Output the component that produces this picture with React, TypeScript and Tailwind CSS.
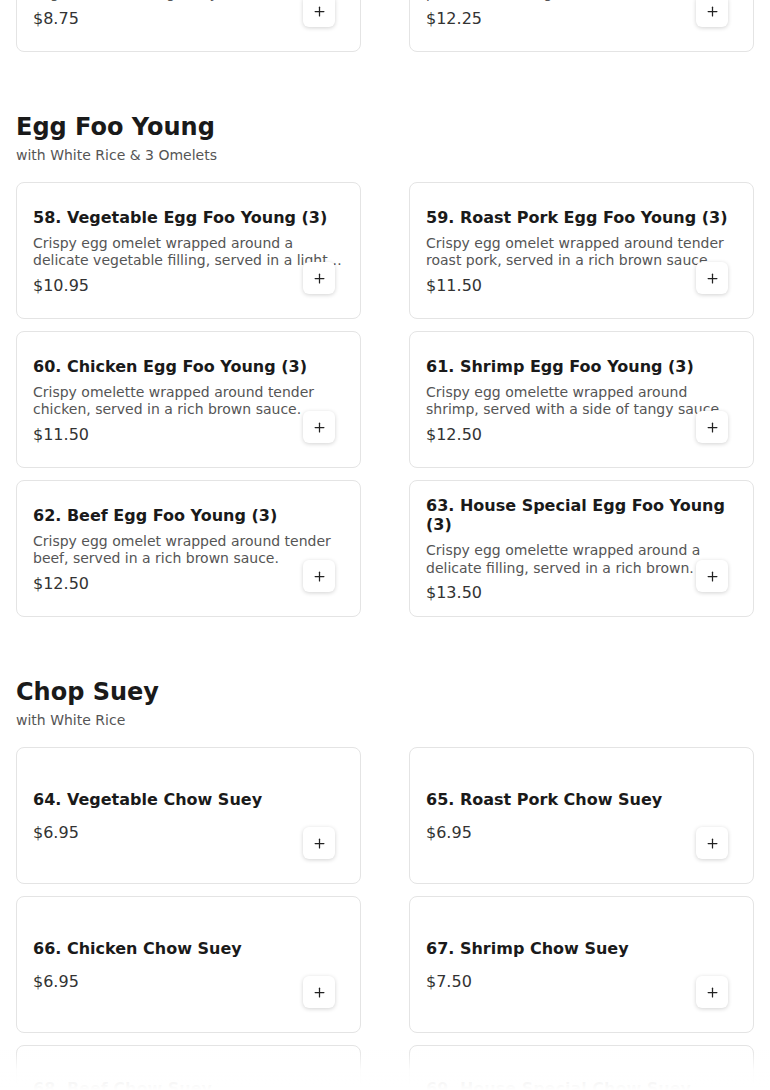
import { Plus } from "lucide-react";

type Item = { name: string; desc?: string; price: string };

const prevItems: Item[] = [
  {
    name: "56. Vegetable Lo Mein",
    desc: "Soft egg noodles tossed with crisp mixed vegetables and a light soy sauce.",
    price: "$8.75",
  },
  {
    name: "57. House Special Lo Mein",
    desc: "Egg noodles with shrimp, chicken and roast pork, stir-fried together.",
    price: "$12.25",
  },
];

const sections: { title: string; subtitle: string; items: Item[] }[] = [
  {
    title: "Egg Foo Young",
    subtitle: "with White Rice & 3 Omelets",
    items: [
      {
        name: "58. Vegetable Egg Foo Young (3)",
        desc: "Crispy egg omelet wrapped around a delicate vegetable filling, served in a light brown sauce.",
        price: "$10.95",
      },
      {
        name: "59. Roast Pork Egg Foo Young (3)",
        desc: "Crispy egg omelet wrapped around tender roast pork, served in a rich brown sauce.",
        price: "$11.50",
      },
      {
        name: "60. Chicken Egg Foo Young (3)",
        desc: "Crispy omelette wrapped around tender chicken, served in a rich brown sauce.",
        price: "$11.50",
      },
      {
        name: "61. Shrimp Egg Foo Young (3)",
        desc: "Crispy egg omelette wrapped around shrimp, served with a side of tangy sauce.",
        price: "$12.50",
      },
      {
        name: "62. Beef Egg Foo Young (3)",
        desc: "Crispy egg omelet wrapped around tender beef, served in a rich brown sauce.",
        price: "$12.50",
      },
      {
        name: "63. House Special Egg Foo Young (3)",
        desc: "Crispy egg omelette wrapped around a delicate filling, served in a rich brown.",
        price: "$13.50",
      },
    ],
  },
  {
    title: "Chop Suey",
    subtitle: "with White Rice",
    items: [
      { name: "64. Vegetable Chow Suey", price: "$6.95" },
      { name: "65. Roast Pork Chow Suey", price: "$6.95" },
      { name: "66. Chicken Chow Suey", price: "$6.95" },
      { name: "67. Shrimp Chow Suey", price: "$7.50" },
      { name: "68. Beef Chow Suey", desc: "Tender beef with bean sprouts.", price: "$7.50" },
      { name: "69. House Special Chow Suey", desc: "Shrimp, chicken and pork.", price: "$7.95" },
    ],
  },
];

function MenuCard({ item }: { item: Item }) {
  return (
    <div className="relative h-[137px] rounded-lg border border-[#e4e4e4] bg-white px-4 pt-1 flex flex-col justify-center">
      <h3 className="text-base font-bold leading-[19px] text-[#1a1a1a] mb-2">{item.name}</h3>
      {item.desc && (
        <p className="text-sm leading-tight text-[#555] line-clamp-2">{item.desc}</p>
      )}
      <div className="mt-1 text-base leading-6 text-[#333]">{item.price}</div>
      <button className="absolute bottom-6 right-[25px] w-8 h-8 rounded-md bg-white shadow-[0_1px_4px_rgba(0,0,0,0.18)] flex items-center justify-center text-[#222]">
        <Plus size={15} strokeWidth={2} />
      </button>
    </div>
  );
}

export default function App() {
  return (
    <div
      className="relative min-h-[1090px] overflow-hidden bg-white px-4"
      style={{ fontFamily: '"DejaVu Sans", "Noto Sans", sans-serif' }}
    >
      <div className="-mt-[85px] grid grid-cols-2 gap-x-12 gap-y-3">
        {prevItems.map((it) => (
          <MenuCard key={it.name} item={it} />
        ))}
      </div>

      {sections.map((s) => (
        <section key={s.title} className="mt-[59px]">
          <h2 className="text-2xl font-bold leading-8 text-[#1a1a1a]">{s.title}</h2>
          <p className="mt-0.5 text-sm leading-5 text-[#555]">{s.subtitle}</p>
          <div className="mt-[17px] grid grid-cols-2 gap-x-12 gap-y-3">
            {s.items.map((it) => (
              <MenuCard key={it.name} item={it} />
            ))}
          </div>
        </section>
      ))}

      <div className="pointer-events-none fixed inset-x-0 bottom-0 h-10 bg-gradient-to-t from-white via-white/90 to-transparent" />
    </div>
  );
}
